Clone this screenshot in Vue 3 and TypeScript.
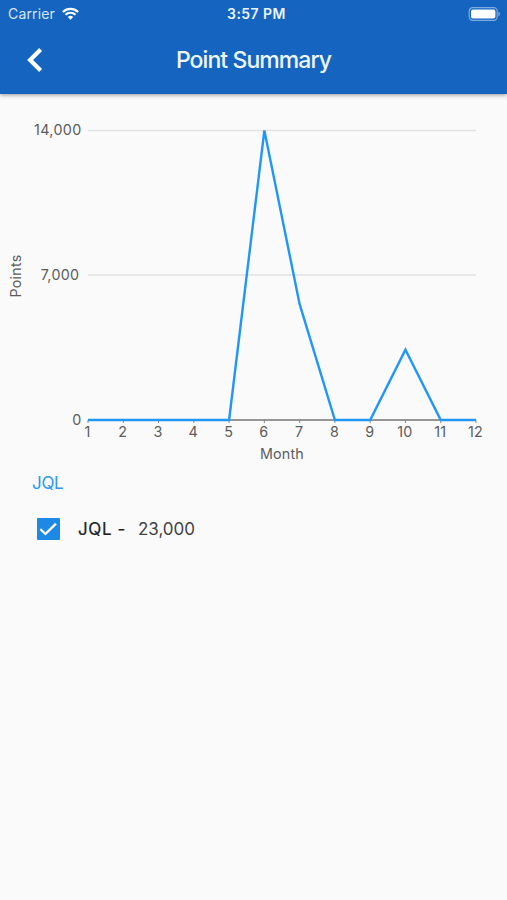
<script setup lang="ts">
import { computed, ref } from 'vue'

interface Series {
  name: string
  total: number
  points: number[]
}

const series: Series = {
  name: 'JQL',
  total: 23000,
  points: [0, 0, 0, 0, 0, 14000, 5600, 0, 0, 3400, 0, 0],
}

const checked = ref(true)
const plot = { left: 88, right: 476, top: 36.5, bottom: 326 }
const maxValue = 14000

const xAt = (index: number): number => plot.left + (index * (plot.right - plot.left)) / 11
const yAt = (value: number): number => plot.bottom - (value / maxValue) * (plot.bottom - plot.top)
const format = (value: number): string => value.toLocaleString('en-US')

const yTicks = [
  { value: 14000, x: 81.5 },
  { value: 7000, x: 79.5 },
  { value: 0, x: 81.5 },
]
const linePoints = computed(() => series.points.map((v, i) => `${xAt(i)},${yAt(v)}`).join(' '))
</script>

<template>
  <div class="screen">
    <header class="header">
      <div class="status">
        <div class="carrier">
          <span>Carrier</span>
          <svg class="wifi" viewBox="0 0 17 13" width="17" height="13">
            <path d="M0.9 5a10.8 10.8 0 0 1 15.2 0" />
            <path d="M3.5 7.8a7.1 7.1 0 0 1 10 0" />
            <path class="dot" d="M5.8 10a3.9 3.9 0 0 1 5.4 0L8.5 12.8z" />
          </svg>
        </div>
        <span class="time">3:57 PM</span>
        <svg class="battery" viewBox="0 0 33 14" width="33" height="14">
          <rect class="shell" x="1.2" y="0.7" width="28" height="12.6" rx="3.6" />
          <rect class="charge" x="3" y="2.4" width="24.4" height="9.2" rx="2" />
          <path class="cap" d="M30.4 4.8q1.6.5 1.6 2.2t-1.6 2.2z" />
        </svg>
      </div>
      <div class="toolbar">
        <button class="back" aria-label="Back">
          <svg viewBox="0 0 16 26" width="16" height="26">
            <path d="M13.6 2.5 3.1 13l10.5 10.5" />
          </svg>
        </button>
        <h1 class="title">Point Summary</h1>
      </div>
    </header>

    <main>
      <svg class="chart" viewBox="0 0 507 372" width="507" height="372">
        <line class="grid" :x1="plot.left" :x2="plot.right" y1="36.5" y2="36.5" />
        <line class="grid" :x1="plot.left" :x2="plot.right" y1="181" y2="181" />
        <text
          v-for="tick in yTicks"
          :key="tick.value"
          class="label end"
          :x="tick.x"
          :y="yAt(tick.value) + 4.5"
        >{{ format(tick.value) }}</text>
        <text class="label middle axis-name" transform="translate(20.8 182) rotate(-90)">Points</text>

        <line class="axis" :x1="plot.left" :x2="plot.right" :y1="plot.bottom" :y2="plot.bottom" />
        <g v-for="(_, i) in series.points" :key="i">
          <line class="tick" :x1="xAt(i)" :x2="xAt(i)" y1="326" y2="329" />
          <text class="label middle" :x="xAt(i) - 0.5" y="343">{{ i + 1 }}</text>
        </g>
        <polyline v-if="checked" class="series" :points="linePoints" />
        <text class="label middle axis-name" x="282" y="365">Month</text>
      </svg>

      <section class="legend">
        <h2 class="group">{{ series.name }}</h2>
        <div class="row" @click="checked = !checked">
          <span class="box" :class="{ on: checked }">
            <svg v-if="checked" viewBox="0 0 22 22" width="22" height="22">
              <path d="M3.4 11.2 8.4 16 19 5.6" />
            </svg>
          </span>
          <span class="name">{{ series.name }} -</span>
          <span class="value">{{ format(series.total) }}</span>
        </div>
      </section>
    </main>
  </div>
</template>

<style>
body {
  background: #fafafa;
}
</style>

<style scoped>
.screen {
  width: 507px;
  height: 900px;
  overflow: hidden;
  background: #fafafa;
  font-family: Inter, 'Liberation Sans', sans-serif;
}
.header {
  height: 94px;
  background: #1565c0;
  color: #fff;
  box-shadow: 0 1px 4px rgba(0, 0, 0, 0.4);
}
.status {
  display: grid;
  grid-template-columns: 1fr auto 1fr;
  align-items: center;
  height: 27px;
  padding: 0 6px 0 8px;
  font-size: 14px;
}
.carrier {
  display: flex;
  align-items: center;
  gap: 7px;
  letter-spacing: 0.15px;
  color: #d5e6f9;
}
.wifi {
  fill: none;
  stroke: #fff;
  stroke-width: 2.2;
}
.wifi .dot {
  fill: #fff;
  stroke: none;
}
.time {
  padding-left: 4px;
  font-weight: 600;
  letter-spacing: 0.45px;
  color: #e8f3ff;
}
.battery {
  justify-self: end;
}
.shell {
  fill: none;
  stroke: #7facdf;
  stroke-width: 1.2;
}
.charge {
  fill: #fff;
}
.cap {
  fill: #7facdf;
}
.toolbar {
  display: grid;
  grid-template-columns: 72px 1fr 72px;
  align-items: center;
  height: 66px;
}
.back {
  display: flex;
  padding: 0 0 0 27px;
  border: 0;
  background: none;
}
.back path {
  fill: none;
  stroke: #fff;
  stroke-width: 4.2;
}
.title {
  margin: 0;
  font-size: 23px;
  font-weight: 500;
  letter-spacing: -0.92px;
  line-height: 28px;
  text-align: center;
  color: #eef6ff;
}
.chart {
  display: block;
}
.grid {
  stroke: #e2e2e2;
  stroke-width: 1.3;
}
.axis {
  stroke: #757575;
  stroke-width: 1.4;
}
.tick {
  stroke: #858585;
  stroke-width: 1;
}
.series {
  fill: none;
  stroke: #2196f3;
  stroke-width: 2.4;
}
.label {
  font-size: 14.3px;
  letter-spacing: 0.2px;
  fill: #5c5c5c;
}
.end {
  text-anchor: end;
  letter-spacing: 0.35px;
}
.middle {
  text-anchor: middle;
}
.legend {
  padding: 6px 32px 0;
}
.group {
  margin: 0;
  font-size: 17px;
  font-weight: 400;
  letter-spacing: -0.3px;
  line-height: 22px;
  color: #2d96ee;
}
.row {
  display: flex;
  align-items: center;
  height: 24px;
  margin-top: 23px;
  padding-left: 5px;
  font-size: 17px;
}
.box {
  box-sizing: border-box;
  width: 23px;
  height: 22px;
  border: 2px solid #757575;
  border-radius: 1px;
}
.box.on {
  border: 0;
  background: #1e88e5;
}
.box svg {
  display: block;
}
.box path {
  fill: none;
  stroke: #fff;
  stroke-width: 2.3;
}
.name {
  margin-left: 18px;
  letter-spacing: 0.6px;
  -webkit-text-stroke: 0.2px #212121;
  color: #212121;
}
.value {
  margin-left: 12px;
  color: #424242;
}
</style>
